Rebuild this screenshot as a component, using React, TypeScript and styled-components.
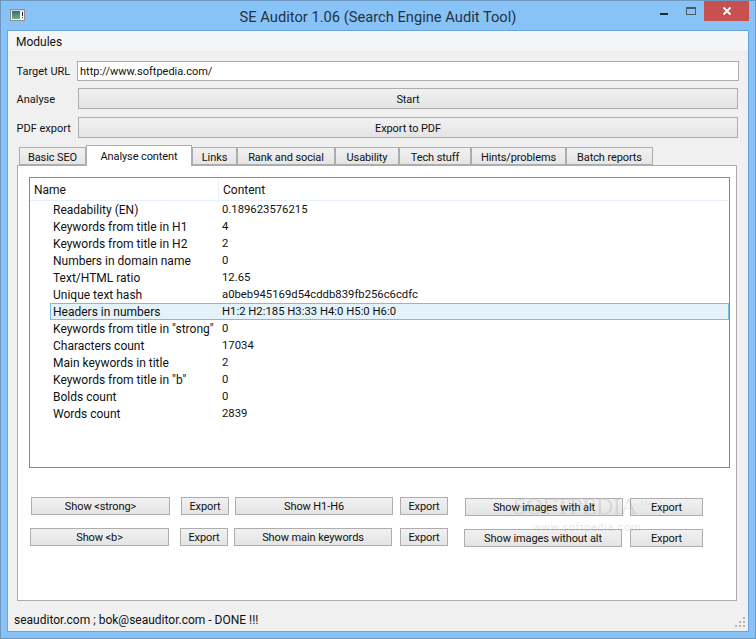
import React from "react";
import styled, { createGlobalStyle } from "styled-components";

const Global = createGlobalStyle`
  html, body { margin: 0; padding: 0; background: #88c3f8; }
  * { box-sizing: border-box; }
  #root { width: 756px; height: 639px; overflow: hidden; }
`;

const FONT = `Roboto, "Open Sans", "Liberation Sans", sans-serif`;

const Frame = styled.div`
  width: 756px;
  height: 639px;
  background: #88c3f8;
  border: 1px solid #6d97bd;
  padding: 0 6px 6px;
  display: flex;
  flex-direction: column;
  font-family: ${FONT};
  font-size: 12px;
  color: #111;
`;

const TitleBar = styled.div`
  height: 29px;
  display: grid;
  grid-template-columns: 1fr auto 1fr;
  flex: none;
`;

const AppIcon = styled.svg`
  margin: 8px 0 0 3px;
  display: block;
`;

const Title = styled.div`
  font-size: 14.7px;
  line-height: 32px;
  color: #24323f;
  white-space: nowrap;
`;

const Controls = styled.div`
  display: flex;
  justify-content: flex-end;
  align-items: flex-start;
`;

const CaptionButton = styled.div<{ $w: number; $red?: boolean }>`
  width: ${(p) => p.$w}px;
  height: 20px;
  background: ${(p) => (p.$red ? "#c75050" : "transparent")};
  display: flex;
  align-items: center;
  justify-content: center;
`;

const Client = styled.div`
  flex: 1;
  border: 1px solid #6aa5da;
  background: #f0f0f0;
  display: flex;
  flex-direction: column;
  position: relative;
`;

const MenuBar = styled.div`
  height: 21px;
  background: #f4f5f7;
  border-bottom: 1px solid #e9eaec;
  padding-left: 8px;
  line-height: 22px;
  flex: none;
`;

const Form = styled.div`
  display: flex;
  flex-direction: column;
  padding: 9px 9px 0 8px;
  flex: none;
`;

const FormRow = styled.div<{ $gap?: number; $inset?: number }>`
  display: flex;
  align-items: center;
  margin-top: ${(p) => p.$gap ?? 0}px;
  padding-right: ${(p) => p.$inset ?? 0}px;
`;

const FieldLabel = styled.div<{ $w: number }>`
  width: ${(p) => p.$w}px;
  flex: none;
  white-space: nowrap;
  font-size: 11px;
  padding: 1px 0 0 0.5px;
`;

const UrlInput = styled.div`
  flex: 1;
  height: 20px;
  background: #fff;
  border: 1px solid #abadb3;
  padding-left: 2px;
  line-height: 20px;
  font-size: 11px;
`;

const Btn = styled.div<{ $w?: number; $h?: number }>`
  ${(p) => (p.$w ? `width: ${p.$w}px; flex: none;` : "flex: 1;")}
  height: ${(p) => p.$h ?? 18}px;
  background: linear-gradient(#f1f1f1, #e4e4e4);
  border: 1px solid #adadad;
  text-align: center;
  line-height: ${(p) => p.$h ?? 18}px;
  font-size: 11px;
  letter-spacing: -0.1px;
  white-space: nowrap;
`;

const Tabs = styled.div`
  display: flex;
  align-items: flex-start;
  height: 20px;
  margin: 7px 0 0 11px;
  position: relative;
  z-index: 1;
  flex: none;
`;

const Tab = styled.div<{ $w: number; $active?: boolean }>`
  width: ${(p) => p.$w}px;
  height: ${(p) => (p.$active ? 21 : 18)}px;
  margin-top: ${(p) => (p.$active ? 0 : 2)}px;
  background: ${(p) => (p.$active ? "#fff" : "linear-gradient(#f1f1f1, #e5e5e5)")};
  border: 1px solid #adadad;
  border-bottom: ${(p) => (p.$active ? "none" : "1px solid #adadad")};
  text-align: center;
  line-height: ${(p) => (p.$active ? 21 : 19)}px;
  font-size: 11px;
  letter-spacing: -0.1px;
  white-space: nowrap;
`;

const Pane = styled.div`
  width: 720px;
  height: 436px;
  margin-left: 9px;
  background: #fff;
  border: 1px solid #adadad;
  padding: 11px 6px 0 11px;
  flex: none;
`;

const Tree = styled.div`
  height: 291px;
  border: 1px solid #828790;
  display: flex;
  flex-direction: column;
`;

const TreeHeader = styled.div`
  height: 23px;
  display: grid;
  grid-template-columns: 189px 1fr;
  background: #fff;
  border-bottom: 1px solid #e5f0fb;
  flex: none;
`;

const HeaderCell = styled.div<{ $last?: boolean }>`
  padding-left: 4px;
  line-height: 25px;
  ${(p) => (p.$last ? "" : "border-right: 1px solid #e5f0fb;")}
`;

const TreeRow = styled.div<{ $sel?: boolean }>`
  height: 17px;
  margin-left: 20px;
  display: grid;
  grid-template-columns: 172px 1fr;
  align-items: center;
  background: ${(p) => (p.$sel ? "#e4f2fa" : "transparent")};
  box-shadow: ${(p) => (p.$sel ? "inset 0 0 0 1px #7dbce6" : "none")};
  white-space: nowrap;
`;

const NameCell = styled.div`
  padding-left: 3px;
`;

const ValueCell = styled.div`
  font-size: 11.3px;
`;

const ButtonArea = styled.div`
  display: flex;
  margin-top: 29px;
`;

const ButtonColumn = styled.div<{ $top?: number }>`
  display: flex;
  flex-direction: column;
  gap: 13px;
  padding-top: ${(p) => p.$top ?? 0}px;
`;

const ButtonRow = styled.div<{ $indent: number }>`
  display: flex;
  margin-left: ${(p) => p.$indent}px;
`;

const Spacer = styled.div<{ $w: number }>`
  width: ${(p) => p.$w}px;
  flex: none;
`;

const StatusBar = styled.div`
  flex: 1;
  padding: 12px 6px 0;
  position: relative;
  white-space: nowrap;
`;

const Grip = styled.svg`
  position: absolute;
  right: 1px;
  bottom: 2px;
`;

const Watermark = styled.div`
  position: absolute;
  left: 505px;
  top: 463px;
  color: rgba(110, 110, 110, 0.18);
  pointer-events: none;
  white-space: nowrap;
`;

const WatermarkBrand = styled.div`
  font-family: "Liberation Serif", serif;
  font-size: 24px;
  line-height: 24px;
  letter-spacing: -0.6px;
`;

const WatermarkTm = styled.sup`
  font-size: 7px;
  line-height: 0;
  letter-spacing: 0;
  margin-left: 3px;
`;

const WatermarkUrl = styled.div`
  font-size: 11px;
  line-height: 12px;
  letter-spacing: 0.6px;
  margin: 4px 0 0 20px;
`;

const rows: [string, string][] = [
  ["Readability (EN)", "0.189623576215"],
  ["Keywords from title in H1", "4"],
  ["Keywords from title in H2", "2"],
  ["Numbers in domain name", "0"],
  ["Text/HTML ratio", "12.65"],
  ["Unique text hash", "a0beb945169d54cddb839fb256c6cdfc"],
  ["Headers in numbers", "H1:2 H2:185 H3:33 H4:0 H5:0 H6:0"],
  ['Keywords from title in "strong"', "0"],
  ["Characters count", "17034"],
  ["Main keywords in title", "2"],
  ['Keywords from title in "b"', "0"],
  ["Bolds count", "0"],
  ["Words count", "2839"],
];

const tabs: [string, number][] = [
  ["Basic SEO", 67],
  ["Analyse content", 106],
  ["Links", 45],
  ["Rank and social", 98],
  ["Usability", 64],
  ["Tech stuff", 72],
  ["Hints/problems", 95],
  ["Batch reports", 87],
];

export default function App() {
  return (
    <>
      <Global />
      <Frame>
        <TitleBar>
          <AppIcon width="15" height="12" viewBox="0 0 15 12">
            <defs>
              <linearGradient id="appIconFill" x1="0" y1="0" x2="0" y2="1">
                <stop offset="0" stopColor="#2f6f78" />
                <stop offset="1" stopColor="#6fb08a" />
              </linearGradient>
            </defs>
            <rect x="0.5" y="0.5" width="14" height="11" fill="#f4f4f4" stroke="#8f8f8f" />
            <rect x="1" y="1" width="13" height="1" fill="#d4d4d4" />
            <rect x="2" y="2" width="8" height="8" fill="url(#appIconFill)" />
            <rect x="12" y="3" width="1" height="4" fill="#222" />
            <rect x="12" y="8" width="1" height="1" fill="#222" />
          </AppIcon>
          <Title>SE Auditor 1.06 (Search Engine Audit Tool)</Title>
          <Controls>
            <CaptionButton $w={26}>
              <svg width="10" height="10" viewBox="0 0 10 10">
                <rect x="1" y="7" width="8" height="2" fill="#1f2a33" />
              </svg>
            </CaptionButton>
            <CaptionButton $w={27}>
              <svg width="10" height="9" viewBox="0 0 10 9">
                <rect x="0.5" y="0.5" width="9" height="7" fill="none" stroke="#4c5a66" />
                <rect x="0" y="0" width="10" height="2" fill="#4c5a66" />
              </svg>
            </CaptionButton>
            <CaptionButton $w={45} $red>
              <svg width="10" height="10" viewBox="0 0 10 10">
                <path d="M1.5 1.5 L8.5 8.5 M8.5 1.5 L1.5 8.5" stroke="#fff" strokeWidth="1.8" />
              </svg>
            </CaptionButton>
          </Controls>
        </TitleBar>
        <Client>
          <MenuBar>Modules</MenuBar>
          <Form>
            <FormRow>
              <FieldLabel $w={61}>Target URL</FieldLabel>
              <UrlInput>http://www.softpedia.com/</UrlInput>
            </FormRow>
            <FormRow $gap={7} $inset={1}>
              <FieldLabel $w={62}>Analyse</FieldLabel>
              <Btn $h={21}>Start</Btn>
            </FormRow>
            <FormRow $gap={8} $inset={1}>
              <FieldLabel $w={62}>PDF export</FieldLabel>
              <Btn $h={21}>Export to PDF</Btn>
            </FormRow>
          </Form>
          <Tabs>
            {tabs.map(([label, w], i) => (
              <Tab key={label} $w={w} $active={i === 1}>
                {label}
              </Tab>
            ))}
          </Tabs>
          <Pane>
            <Tree>
              <TreeHeader>
                <HeaderCell>Name</HeaderCell>
                <HeaderCell $last>Content</HeaderCell>
              </TreeHeader>
              {rows.map(([name, value], i) => (
                <TreeRow key={name} $sel={i === 6}>
                  <NameCell>{name}</NameCell>
                  <ValueCell>{value}</ValueCell>
                </TreeRow>
              ))}
            </Tree>
            <ButtonArea>
              <ButtonColumn>
                <ButtonRow $indent={2}>
                  <Btn $w={139}>Show &lt;strong&gt;</Btn>
                  <Spacer $w={11} />
                  <Btn $w={48}>Export</Btn>
                  <Spacer $w={6} />
                  <Btn $w={158}>Show H1-H6</Btn>
                  <Spacer $w={7} />
                  <Btn $w={48}>Export</Btn>
                </ButtonRow>
                <ButtonRow $indent={1}>
                  <Btn $w={139}>Show &lt;b&gt;</Btn>
                  <Spacer $w={11} />
                  <Btn $w={48}>Export</Btn>
                  <Spacer $w={6} />
                  <Btn $w={158}>Show main keywords</Btn>
                  <Spacer $w={8} />
                  <Btn $w={48}>Export</Btn>
                </ButtonRow>
              </ButtonColumn>
              <ButtonColumn $top={1}>
                <ButtonRow $indent={17}>
                  <Btn $w={158}>Show images with alt</Btn>
                  <Spacer $w={7} />
                  <Btn $w={73}>Export</Btn>
                </ButtonRow>
                <ButtonRow $indent={16}>
                  <Btn $w={158}>Show images without alt</Btn>
                  <Spacer $w={8} />
                  <Btn $w={73}>Export</Btn>
                </ButtonRow>
              </ButtonColumn>
            </ButtonArea>
          </Pane>
          <StatusBar>
            seauditor.com ; bok@seauditor.com - DONE !!!
            <Grip width="12" height="12" viewBox="0 0 12 12">
              <g fill="#b5b5b5">
                <rect x="8" y="0" width="2" height="2" />
                <rect x="4" y="4" width="2" height="2" />
                <rect x="8" y="4" width="2" height="2" />
                <rect x="0" y="8" width="2" height="2" />
                <rect x="4" y="8" width="2" height="2" />
                <rect x="8" y="8" width="2" height="2" />
              </g>
            </Grip>
          </StatusBar>
          <Watermark>
            <WatermarkBrand>
              SOFTPEDIA<WatermarkTm>TM</WatermarkTm>
            </WatermarkBrand>
            <WatermarkUrl>www.softpedia.com</WatermarkUrl>
          </Watermark>
        </Client>
      </Frame>
    </>
  );
}
